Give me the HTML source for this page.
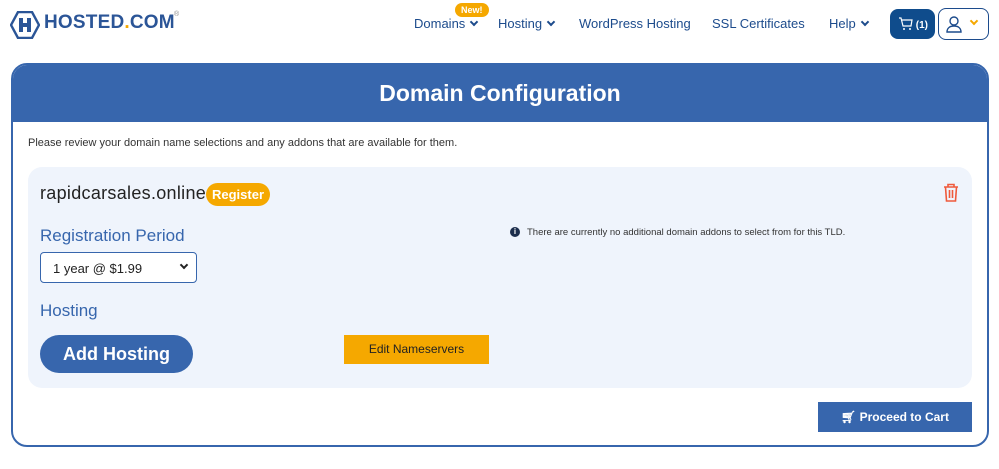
<!DOCTYPE html>
<html><head><meta charset="utf-8"><style>
*{margin:0;padding:0;box-sizing:border-box}
body{width:999px;height:469px;background:#fff;font-family:"Liberation Sans",sans-serif;position:relative;overflow:hidden;color:#222}
.abs{position:absolute}
.nav{font-size:13px;color:#1c4b8c;top:16px}
.chev{display:inline-block;width:6px;height:6px;border-right:2px solid #1c4b8c;border-bottom:2px solid #1c4b8c;transform:rotate(45deg);margin-left:6px;position:relative;top:-3px}
</style></head><body>
<svg class="abs" style="left:10px;top:11px" width="30" height="28" viewBox="0 0 30 28"><path d="M8 1H22L29 14L22 27H8L1 14Z" fill="none" stroke="#2b5597" stroke-width="2.4"/><rect x="9" y="7" width="4" height="14" fill="#2b5597"/><rect x="17" y="7" width="4" height="14" fill="#2b5597"/><rect x="9" y="12" width="12" height="4" fill="#2b5597"/></svg>
<div class="abs" style="left:44px;top:12px;font-size:19px;font-weight:bold;color:#2b5597;letter-spacing:0.2px">HOSTED<span style="color:#f5a800">.</span>COM</div>
<div class="abs" style="left:174px;top:11px;font-size:7px;color:#888">®</div>
<div class="abs" style="left:455px;top:3px;background:#f5a800;color:#fff;font-size:9px;font-weight:bold;border-radius:8px;padding:2px 6px">New!</div>
<div class="abs nav" style="left:414px">Domains<span class="chev"></span></div>
<div class="abs nav" style="left:498px">Hosting<span class="chev"></span></div>
<div class="abs nav" style="left:579px">WordPress Hosting</div>
<div class="abs nav" style="left:712px">SSL Certificates</div>
<div class="abs nav" style="left:829px">Help<span class="chev"></span></div>
<div class="abs" style="left:890px;top:9px;width:45px;height:30px;background:#0f4c8c;border-radius:8px;color:#fff;font-size:10px;font-weight:bold;padding:8px 0 0 9px">
<svg width="14" height="14" viewBox="0 0 14 14" style="vertical-align:-3px"><path d="M0 1h2l2 8h8l1-6H3" fill="none" stroke="#fff" stroke-width="1.2"/><circle cx="5" cy="12" r="1" fill="#fff"/><circle cx="11" cy="12" r="1" fill="#fff"/></svg> (1)</div>
<div class="abs" style="left:938px;top:8px;width:51px;height:32px;border:1.5px solid #1c4b8c;border-radius:8px">
<svg class="abs" style="left:6px;top:6px" width="18" height="18" viewBox="0 0 18 18"><circle cx="9" cy="6" r="4" fill="none" stroke="#1c4b8c" stroke-width="1.4"/><path d="M2 17c0-4 3-6 7-6s7 2 7 6z" fill="none" stroke="#1c4b8c" stroke-width="1.4"/></svg>
<span class="abs" style="left:32px;top:9px;width:6px;height:6px;border-right:2px solid #f5a800;border-bottom:2px solid #f5a800;transform:rotate(45deg)"></span></div>

<div class="abs" style="left:11px;top:63px;width:978px;height:384px;border:2px solid #3766ad;border-radius:16px;overflow:hidden">
<div style="height:57px;background:#3766ad;color:#fff;font-size:23px;font-weight:bold;text-align:center;line-height:56px">Domain Configuration</div>
</div>
<div class="abs" style="left:28px;top:137px;font-size:11px;color:#333">Please review your domain name selections and any addons that are available for them.</div>
<div class="abs" style="left:28px;top:167px;width:944px;height:221px;background:#eff4fc;border-radius:14px"></div>
<div class="abs" style="left:40px;top:183px;font-size:18px;color:#222;letter-spacing:0.3px">rapidcarsales.online</div>
<div class="abs" style="left:206px;top:183px;background:#f5a800;color:#fff;font-size:13px;font-weight:bold;border-radius:12px;padding:4px 6px">Register</div>
<svg class="abs" style="left:943px;top:183px" width="16" height="19" viewBox="0 0 16 19"><path d="M1 4h14M5 4V1.5h6V4M2.5 4l1 14h9l1-14M6.5 7v8M9.5 7v8" fill="none" stroke="#ef5a3c" stroke-width="1.6"/></svg>
<div class="abs" style="left:40px;top:226px;font-size:17px;color:#3766ad">Registration Period</div>
<div class="abs" style="left:40px;top:252px;width:157px;height:31px;background:#fff;border:1px solid #3766ad;border-radius:4px;font-size:13px;color:#222;padding:8px 0 0 12px">1 year @ $1.99<span class="abs" style="right:9px;top:9px;width:6px;height:6px;border-right:2px solid #222;border-bottom:2px solid #222;transform:rotate(45deg)"></span></div>
<div class="abs" style="left:40px;top:301px;font-size:17px;color:#3766ad">Hosting</div>
<div class="abs" style="left:40px;top:335px;width:153px;height:38px;background:#3766ad;border-radius:19px;color:#fff;font-size:18px;font-weight:bold;text-align:center;line-height:38px">Add Hosting</div>
<div class="abs" style="left:344px;top:335px;width:145px;height:29px;background:#f5a800;color:#222;font-size:12px;text-align:center;line-height:29px">Edit Nameservers</div>
<div class="abs" style="left:510px;top:227px;width:10px;height:10px;border-radius:50%;background:#1c2d4c;color:#fff;font-size:8px;font-weight:bold;text-align:center;line-height:10px">i</div>
<div class="abs" style="left:527px;top:227px;font-size:9.5px;color:#333">There are currently no additional domain addons to select from for this TLD.</div>
<div class="abs" style="left:818px;top:402px;width:154px;height:30px;background:#3766ad;color:#fff;font-size:12px;font-weight:bold;text-align:center;line-height:30px">🛒︎ Proceed to Cart</div>
</body></html>
